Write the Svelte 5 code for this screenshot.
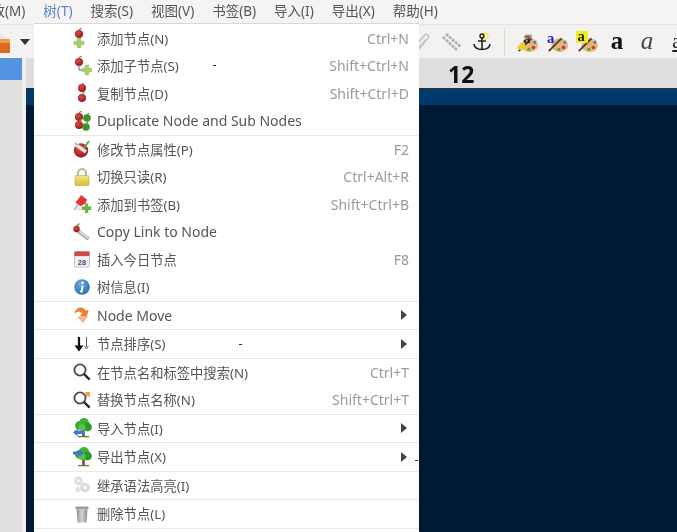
<script>
  const menus = ['修改(M)', '树(T)', '搜索(S)', '视图(V)', '书签(B)', '导入(I)', '导出(X)', '帮助(H)'];
  const groups = [
    [
      { t: '添加节点(N)', k: 'Ctrl+N', i: 'add' },
      { t: '添加子节点(S)', k: 'Shift+Ctrl+N', i: 'child' },
      { t: '复制节点(D)', k: 'Shift+Ctrl+D', i: 'dup' },
      { t: 'Duplicate Node and Sub Nodes', i: 'dupsub', en: true }
    ],
    [
      { t: '修改节点属性(P)', k: 'F2', i: 'edit' },
      { t: '切换只读(R)', k: 'Ctrl+Alt+R', i: 'lock' },
      { t: '添加到书签(B)', k: 'Shift+Ctrl+B', i: 'pin' },
      { t: 'Copy Link to Node', i: 'link', en: true },
      { t: '插入今日节点', k: 'F8', i: 'cal' },
      { t: '树信息(I)', i: 'info' }
    ],
    [{ t: 'Node Move', i: 'move', sub: true, en: true }],
    [{ t: '节点排序(S)', i: 'sort', sub: true }],
    [
      { t: '在节点名和标签中搜索(N)', k: 'Ctrl+T', i: 'find' },
      { t: '替换节点名称(N)', k: 'Shift+Ctrl+T', i: 'replace' }
    ],
    [{ t: '导入节点(I)', i: 'import', sub: true }],
    [{ t: '导出节点(X)', i: 'export', sub: true }],
    [{ t: '继承语法高亮(I)', i: 'gears' }],
    [{ t: '删除节点(L)', i: 'trash' }]
  ];
</script>

{#snippet cherry(x, y, r = 4)}
  <path d="M{x} {y - r + 0.6}q.8 -2 3 -2.8" fill="none" stroke="#5c9a2c" stroke-width="1.2" />
  <circle cx={x} cy={y} r={r} fill="url(#gc)" />
{/snippet}

{#snippet plus(x, y)}
  <path d="M{x - 1.8} {y - 5}h3.6v3.2h3.2v3.6h-3.2v3.2h-3.6v-3.2h-3.2v-3.6h3.2z" fill="#a5cf6a" stroke="#8fb95a" stroke-width=".4" />
{/snippet}

{#snippet green(x, y)}
  <path d="M{x} {y - 3}q.6 -1.4 2 -1.8" fill="none" stroke="#3f7a20" stroke-width="1" />
  <circle cx={x} cy={y} r="3.8" fill="#3d9426" />
{/snippet}

{#snippet tree(x)}
  <path d="M{x + 7.5} 18v-7" stroke="#7a3a22" stroke-width="2.4" />
  <circle cx={x + 3.5} cy="7.5" r="4.4" fill="#35a82e" />
  <circle cx={x + 8} cy="5" r="5" fill="#3cb536" />
  <circle cx={x + 11.5} cy="9" r="4.4" fill="#2b9a2a" />
  <circle cx={x + 6} cy="9.5" r="3.6" fill="#54c44a" />
  <path d="M{x + 2} 18.6h11" stroke="#5f7f4c" stroke-width="1.4" />
{/snippet}

{#snippet icon(n)}
  <svg class="ic" viewBox="0 0 20 20" aria-hidden="true">
    {#if n === 'add'}
      {@render cherry(7, 6)}
      {@render plus(7, 15)}
    {:else if n === 'child'}
      {@render cherry(7, 6)}
      <path d="M7 9v5h5" fill="none" stroke="#666" stroke-width="1" />
      {@render plus(15, 14)}
    {:else if n === 'dup'}
      {@render cherry(10, 5)}
      {@render cherry(10, 15)}
    {:else if n === 'dupsub'}
      {@render cherry(7, 6)}
      {@render green(15, 7)}
      {@render cherry(7, 14)}
      {@render green(14, 16)}
    {:else if n === 'edit'}
      <circle cx="9" cy="11.5" r="7.2" fill="url(#gc)" />
      <path d="M3 5l11 8" stroke="#e4e4e4" stroke-width="3.6" />
      <path d="M2.5 3.5l4 3" stroke="#999" stroke-width="1" />
      <path d="M12 9l5 -7" stroke="#6aa832" stroke-width="2" />
    {:else if n === 'lock'}
      <path d="M6 9V6a4 4 0 0 1 8 0v3" fill="none" stroke="#b8b8ac" stroke-width="2" />
      <rect x="3" y="8.5" width="14" height="10" rx="1.2" fill="url(#gl)" stroke="#a89a30" stroke-width=".5" />
    {:else if n === 'pin'}
      <path d="M9 1l6 4.6-1.4 4-5.2 2.6L3.4 8.6 6 5.6z" fill="#e2353b" />
      <path d="M6 10l-3.6 6" stroke="#b9b9b9" stroke-width="1.6" />
      <path d="M5.6 12.5h6v4h-7z" fill="#e3e3e3" />
      <path d="M13 9.6h3.2v3h3v3.4h-3v3h-3.2v-3h-3v-3.4h3z" fill="#6fb342" />
    {:else if n === 'link'}
      <path d="M6 9l10.5 8" stroke="#b0b0b0" stroke-width="4" />
      <path d="M7 9l9 7" stroke="#e8e8e8" stroke-width="1.2" />
      {@render cherry(4.5, 7, 3.2)}
    {:else if n === 'cal'}
      <rect x="2.5" y="2.5" width="15" height="15.5" rx="1" fill="#eef0f4" stroke="#aeb2ba" stroke-width=".7" />
      <rect x="2.5" y="2.5" width="15" height="4.6" fill="#cf4b41" />
      <text class="caltxt" x="10" y="15.6" text-anchor="middle">28</text>
    {:else if n === 'info'}
      <circle cx="10" cy="10" r="7.8" fill="url(#gi)" />
      <circle cx="10.6" cy="5.8" r="1.3" fill="#fff" />
      <path d="M10.6 8.4l-1 6.2h-1.4" fill="none" stroke="#fff" stroke-width="1.9" />
    {:else if n === 'move'}
      <path d="M2.5 8.5c1.5-7 9-7.5 11-3l3.2-.6-2 6.8-7-.4 2.4-2.8C8.4 6.2 5.4 6.4 2.5 8.5z" fill="#ee8033" />
      <path d="M5 11.5h11l-5 6.5z" fill="#f6b48a" />
    {:else if n === 'sort'}
      <path d="M7 3v11" stroke="#111" stroke-width="2.2" />
      <path d="M2.4 11.4h9.2L7 17.4z" fill="#111" />
      <path d="M14.5 3v10M12.6 12l1.9 3 1.9-3" fill="none" stroke="#666" stroke-width="1" />
    {:else if n === 'find' || n === 'replace'}
      <circle cx="8" cy="8" r="5.6" fill="#fff" stroke="#4a4a4a" stroke-width="1.8" />
      <path d="M12 12l5.6 5.6" stroke="#222" stroke-width="2.4" />
      {#if n === 'replace'}
        <path d="M13 2h5v5l-2-1-2 1z" fill="#f2a14a" />
      {/if}
    {:else if n === 'import'}
      {@render tree(4)}
      <path d="M1 14.4l4.6-3.8v2.2h7v3.2h-7v2.2z" fill="#4a6fd8" />
    {:else if n === 'export'}
      {@render tree(4)}
      <path d="M12 6L7.4 2.2v2.2H1v3.2h6.4v2.2z" fill="#4a6fd8" />
    {:else if n === 'gears'}
      <circle cx="6.5" cy="6" r="4.4" fill="#dedede" />
      <circle cx="6.5" cy="6" r="1.5" fill="#f6f6f6" />
      <circle cx="13" cy="12.5" r="5" fill="#dcdcdc" />
      <circle cx="13" cy="12.5" r="1.8" fill="#f6f6f6" />
      <circle cx="6" cy="14.5" r="2.6" fill="#e2e2e2" />
    {:else if n === 'trash'}
      <rect x="3.5" y="2.5" width="13" height="3" rx="1.2" fill="#9a9d96" />
      <path d="M4.5 5.5h11l-1 13h-9z" fill="url(#gt)" />
    {/if}
  </svg>
{/snippet}

{#snippet palette()}
  <ellipse cx="15" cy="15.5" rx="9" ry="7.5" fill="#e2b67c" />
  <circle cx="19" cy="18" r="2" fill="#d8342c" />
  <circle cx="14" cy="20" r="1.8" fill="#57a83a" />
  <circle cx="20.5" cy="12.5" r="1.6" fill="#3e7fd0" />
  <path d="M3 22L17 8" stroke="#4a3e30" stroke-width="2" />
{/snippet}

<svg class="defs" aria-hidden="true">
  <defs>
    <radialGradient id="gc" cx=".4" cy=".35" r=".75">
      <stop offset="0" stop-color="#e0474c" />
      <stop offset="1" stop-color="#8e1216" />
    </radialGradient>
    <linearGradient id="gl" x1="0" y1="0" x2="0" y2="1">
      <stop offset="0" stop-color="#f3e68a" />
      <stop offset="1" stop-color="#d8bf32" />
    </linearGradient>
    <radialGradient id="gi" cx=".4" cy=".3" r=".8">
      <stop offset="0" stop-color="#6fa8dc" />
      <stop offset="1" stop-color="#2a67ac" />
    </radialGradient>
    <linearGradient id="gt" x1="0" y1="0" x2="1" y2="0">
      <stop offset="0" stop-color="#8f928c" />
      <stop offset=".5" stop-color="#d4d6d0" />
      <stop offset="1" stop-color="#8a8d87" />
    </linearGradient>
  </defs>
</svg>

<div class="app">
  <nav class="menubar">
    {#each menus as m, i}
      <span class="mi" class:active={i === 1}>{m}</span>
    {/each}
  </nav>

  <div class="toolbar">
    <svg class="tool boxicon" viewBox="0 0 11 22" aria-hidden="true">
      <path d="M0 2l7 6H0z" fill="#e8e6e0" />
      <path d="M0 8h10v14H0z" fill="#dd6a1e" />
      <path d="M0 8h10v4H0z" fill="#ef9a4e" />
    </svg>
    <span class="caret"></span>
    <span class="spacer"></span>
    <div class="tools">
      <svg class="tool" viewBox="0 0 22 22" aria-hidden="true">
        <path d="M7 19l10-12c2-2.4-1.6-5-3.6-2.6L4.4 15c-1.6 2.2 1 4.4 2.8 2.6l7.4-8.8" fill="none" stroke="#c4c4c1" stroke-width="1.7" />
      </svg>
      <svg class="tool" viewBox="0 0 22 22" aria-hidden="true">
        <path d="M2 6l14 13M5 3l15 13" stroke="#aeaeac" stroke-width="2.6" stroke-dasharray="3 1" />
      </svg>
      <svg class="tool" viewBox="0 0 22 22" aria-hidden="true">
        <circle cx="14" cy="5" r="3.2" fill="#fbf7a8" stroke="#eadf50" stroke-width="1" />
        <circle cx="11" cy="5" r="2" fill="none" stroke="#222" stroke-width="1.4" />
        <path d="M11 7v11M7 10h8M3 13c.5 4 4 5.5 8 5.5s7.5-1.5 8-5.5" fill="none" stroke="#222" stroke-width="1.6" />
      </svg>
      <span class="tsep"></span>
      <svg class="tool" viewBox="0 0 24 24" aria-hidden="true">
        {@render palette()}
        <text class="pa" x="8" y="13" fill="#222">a</text>
        <path d="M10 4l7 0 0 5-7 0z" fill="#8a6a3a" opacity=".7" />
        <path d="M1 18c2-1 3-5 6-6 3 2 4 5 5 7-3 3-9 2-11-1z" fill="#e8cf2e" />
      </svg>
      <svg class="tool" viewBox="0 0 24 24" aria-hidden="true">
        {@render palette()}
        <text class="pa" x="1" y="13" fill="#1c1cf0">a</text>
      </svg>
      <svg class="tool" viewBox="0 0 24 24" aria-hidden="true">
        {@render palette()}
        <rect x="0" y="0" width="13" height="13" fill="#f0f018" />
        <text class="pa" x="1.5" y="11" fill="#222">a</text>
      </svg>
      <span class="tool glyph bold">a</span>
      <span class="tool glyph ital">a</span>
      <span class="tool glyph under">a</span>
    </div>
  </div>

  <div class="main">
    <aside class="tree"><div class="sel"></div></aside>
    <div class="gutter"></div>
    <section class="editor">
      <header class="head">12</header>
      <div class="band"></div>
      <div class="body"></div>
    </section>
  </div>

  <div class="menu">
    {#each groups as g}
      <div class="group">
        {#each g as r}
          <div class="row">
            {@render icon(r.i)}
            <span class="label" class:en={r.en}>{r.t}</span>
            {#if r.k}<span class="key">{r.k}</span>{/if}
            {#if r.sub}<span class="arrow"></span>{/if}
          </div>
        {/each}
      </div>
    {/each}
    <i class="speck s1"></i><i class="speck s2"></i><i class="speck s3"></i>
  </div>
</div>

<style>
  :global(body) { margin: 0; background: #fff; }
  .defs { position: absolute; width: 0; height: 0; }
  .app {
    position: relative; width: 677px; height: 532px; overflow: hidden;
    display: flex; flex-direction: column; background: #f3f2f0;
    font: 13.3px "Noto Sans", "Noto Sans CJK SC", sans-serif; color: #555;
    filter: blur(.45px);
  }
  .menubar {
    height: 24px; flex: none; display: flex; gap: 18px; margin-left: -22px;
    align-items: center; background: #f5f4f2; box-sizing: border-box;
    padding-bottom: 4px; white-space: nowrap; color: #555; font-size: 13.5px;
  }
  .mi { position: relative; }
  .mi.active { color: #5b86c4; }
  .mi.active::after {
    content: ""; position: absolute; left: -9px; right: -9px; bottom: -6px; height: 2px; background: #4a90e2;
  }
  .toolbar {
    height: 34px; flex: none; display: flex; align-items: center; background: #f3f2f0;
    border-top: 1px solid #e4e3e0; box-sizing: border-box;
  }
  .tool { width: 22px; height: 22px; flex: none; display: block; }
  .boxicon { width: 11px; height: 22px; }
  .caret {
    margin-left: 9px; width: 0; height: 0;
    border-left: 5px solid transparent; border-right: 5px solid transparent; border-top: 6px solid #333;
  }
  .spacer { flex: 1; }
  .tools { display: flex; align-items: center; gap: 8px; margin-right: -11px; }
  .tsep { width: 1px; height: 28px; background: #dcdbd8; margin: 0 3px; }
  .pa { font: bold 16px "Liberation Serif", serif; }
  .caltxt { font: bold 7.5px "Liberation Sans", sans-serif; fill: #3d4a66; }
  .glyph { font-family: "Liberation Serif", serif; font-size: 25px; line-height: 20px; text-align: center; color: #222; }
  .bold { font-weight: 700; color: #111; }
  .ital { font-style: italic; color: #444; }
  .under { text-decoration: underline; font-size: 21px; }
  .main { flex: 1; display: flex; min-height: 0; }
  .tree { width: 22px; flex: none; background: #e0e0e0; }
  .sel { height: 22px; background: #5294e2; }
  .gutter { width: 4px; flex: none; background: #f0efed; }
  .editor { flex: 1; display: flex; flex-direction: column; }
  .head {
    height: 31px; flex: none; box-sizing: border-box; background: #dedede;
    border-bottom: 1px solid #333; color: #111;
    font: 700 23px/32px "Noto Sans", sans-serif; padding-left: 422px;
  }
  .band { height: 16px; flex: none; background: #003a6b; }
  .body { flex: 1; background: #001a33; }
  .menu {
    position: absolute; left: 34px; top: 24px; width: 385px; bottom: 0; overflow: hidden;
    background: #fff; box-shadow: 0 -1px 0 #d8d8d8; padding-top: .5px;
  }
  .group { border-bottom: 1px solid #e8e8e8; }
  .row {
    height: 27.5px; display: flex; align-items: center; box-sizing: border-box;
    padding: 0 10px 0 38px; position: relative;
  }
  .ic { width: 20px; height: 20px; flex: none; margin-right: 5px; }
  .label { flex: 1; white-space: nowrap; }
  .label.en { font-size: 14px; }
  .key { color: #9a9a9a; font-size: 14px; }
  .arrow {
    width: 0; height: 0; border-top: 5px solid transparent; border-bottom: 5px solid transparent;
    border-left: 6px solid #444; margin-right: 2px;
  }
  .speck { position: absolute; width: 3px; height: 1px; background: #2a3a10; }
  .s1 { left: 179px; top: 41px; }
  .s2 { left: 205px; top: 320px; }
  .s3 { left: 381px; top: 436px; }
</style>
